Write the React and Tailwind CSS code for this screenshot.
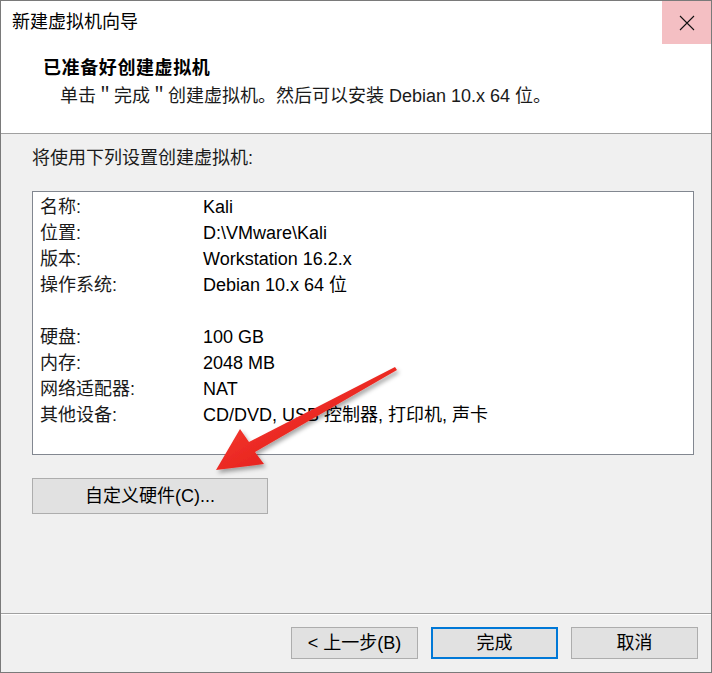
import React from 'react'

const rows = [
  ['名称:', 'Kali'],
  ['位置:', 'D:\\VMware\\Kali'],
  ['版本:', 'Workstation 16.2.x'],
  ['操作系统:', 'Debian 10.x 64 位'],
  ['', ''],
  ['硬盘:', '100 GB'],
  ['内存:', '2048 MB'],
  ['网络适配器:', 'NAT'],
  ['其他设备:', 'CD/DVD, USB 控制器, 打印机, 声卡'],
]

const Arrow = () => (
  <svg
    className="absolute left-0 top-0 pointer-events-none"
    width="712"
    height="673"
    viewBox="0 0 712 673"
  >
    <defs>
      <linearGradient id="arrowFill" x1="0" y1="0" x2="1" y2="1">
        <stop offset="0" stopColor="#ff4a3d" />
        <stop offset="1" stopColor="#d80b0b" />
      </linearGradient>
      <filter id="arrowShadow" x="-20%" y="-20%" width="140%" height="140%">
        <feDropShadow dx="2" dy="3" stdDeviation="2" floodColor="#000" floodOpacity="0.35" />
      </filter>
    </defs>
    <polygon
      points="215,469 239,428 248,441 394,366 396,369 254,451 263,463"
      fill="url(#arrowFill)"
      filter="url(#arrowShadow)"
    />
  </svg>
)

const WinButton = ({ children, primary, className = '' }) => (
  <div
    className={`flex items-center justify-center bg-[#e1e1e1] text-[18px] text-black ${
      primary ? 'border-2 border-[#0078d7]' : 'border border-[#adadad]'
    } ${className}`}
  >
    {children}
  </div>
)

export default function App() {
  return (
    <div className="relative w-[712px] h-[673px] bg-[#f0f0f0] border border-[#7a7a7a] flex flex-col font-['Liberation_Sans','Noto_Sans_CJK_SC',sans-serif] text-black overflow-hidden">
      {/* title bar */}
      <div className="h-[43px] bg-white flex items-center justify-between shrink-0">
        <span className="pl-[11px] text-[18px]">新建虚拟机向导</span>
        <div className="w-[49px] h-[43px] bg-[#f4bfc3] flex items-center justify-center">
          <svg width="16" height="16" viewBox="0 0 16 16">
            <path d="M1 1L15 15M15 1L1 15" stroke="#111" strokeWidth="1.1" fill="none" />
          </svg>
        </div>
      </div>

      {/* header */}
      <div className="h-[89px] bg-white shrink-0 flex flex-col pt-[11px]">
        <div className="pl-[42px] text-[18px] font-bold leading-[26px] tracking-[0.6px]">已准备好创建虚拟机</div>
        <div className="pl-[59px] mt-[2px] text-[18px] leading-[26px] text-[#1a1a1a]">
          单击＂完成＂创建虚拟机。然后可以安装 Debian 10.x 64 位。
        </div>
      </div>
      <div className="h-px bg-[#a0a0a0] shrink-0" />

      {/* body */}
      <div className="flex-1 flex flex-col pl-[31px] pr-[17px]">
        <div className="mt-[11px] text-[18px] leading-[26px] text-[#1a1a1a]">将使用下列设置创建虚拟机:</div>
        <div className="mt-[20px] h-[264px] bg-white border border-[#828790] pt-[2px] pl-[7px]">
          {rows.map(([label, value], i) => (
            <div key={i} className="grid grid-cols-[163px_1fr] h-[26px] items-center text-[18px] leading-[26px]">
              <span className="text-[#1a1a1a]">{label}</span>
              <span>{value}</span>
            </div>
          ))}
        </div>
        <WinButton className="mt-[23px] w-[236px] h-[36px]">自定义硬件(C)...</WinButton>
      </div>

      {/* footer */}
      <div className="h-px bg-[#a0a0a0] shrink-0" />
      <div className="h-px bg-white shrink-0" />
      <div className="h-[57px] shrink-0 flex justify-end gap-[13px] pt-[12px] pr-[13px]">
        <WinButton className="w-[127px] h-[32px]">&lt; 上一步(B)</WinButton>
        <WinButton primary className="w-[127px] h-[32px]">完成</WinButton>
        <WinButton className="w-[127px] h-[32px]">取消</WinButton>
      </div>

      <Arrow />
    </div>
  )
}
